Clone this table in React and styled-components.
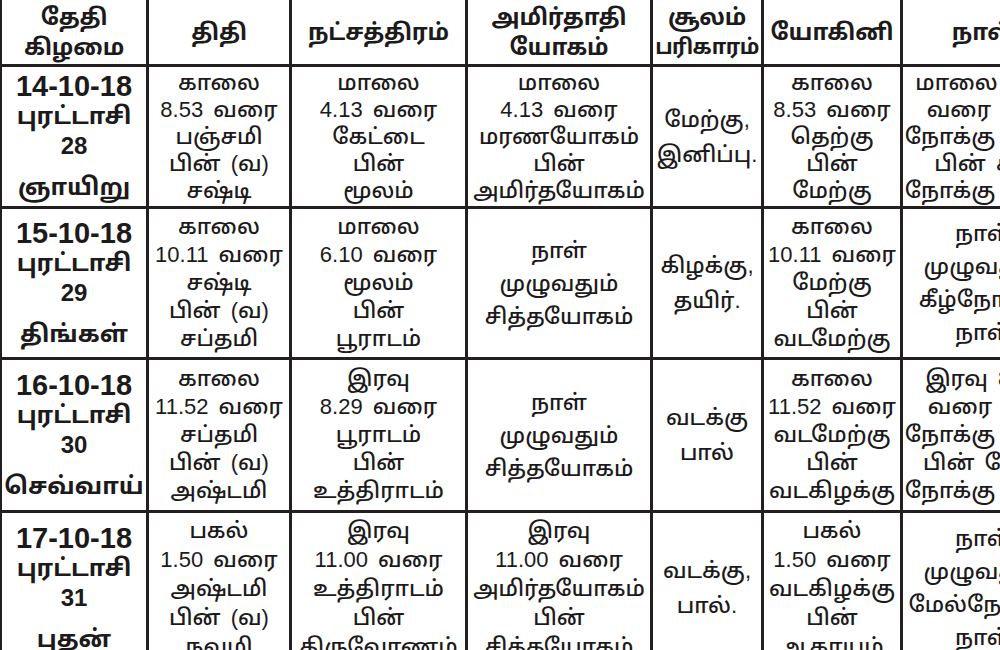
import React from 'react'
import styled, { createGlobalStyle } from 'styled-components'

const GlobalStyle = createGlobalStyle`
  html, body {
    margin: 0;
    padding: 0;
    background: #ffffff;
  }
  body {
    font-family: "Liberation Sans", "Noto Sans Tamil", "Lohit Tamil", "Noto Sans", sans-serif;
    color: #1c1a1b;
  }
`

const Page = styled.div`
  width: 1000px;
  height: 650px;
  overflow: hidden;
  background: #ffffff;
`

const Grid = styled.div`
  display: grid;
  grid-template-columns: 144px 140px 173px 182px 108px 136px 160px;
  grid-template-rows: 64px 139px 148px 150px 150px;
  gap: 3px;
  padding: 0 0 3px 2px;
  width: max-content;
  background: #231f20;
`

const Cell = styled.div`
  background: #ffffff;
  display: flex;
  flex-direction: column;
  align-items: center;
  justify-content: center;
  text-align: center;
  white-space: nowrap;
  overflow: hidden;
`

const HeadLine = styled.div`
  font-weight: 700;
  font-size: ${p => (p.$tight ? '21px' : '23px')};
  line-height: 30px;
  letter-spacing: ${p => (p.$tight ? '-0.6px' : '-0.2px')};
`

const DateLine = styled.div`
  font-weight: 700;
  font-size: ${p => (p.$big ? '29px' : '24px')};
  line-height: 30px;
  margin-top: ${p => (p.$gap ? '11px' : '0')};
`

const Line = styled.div`
  font-size: 22px;
  font-weight: 500;
  line-height: ${p => p.$lh || 27}px;
  word-spacing: 4px;
`

const headers = [
  ['தேதி', 'கிழமை'],
  ['திதி'],
  ['நட்சத்திரம்'],
  ['அமிர்தாதி', 'யோகம்'],
  ['சூலம்', 'பரிகாரம்'],
  ['யோகினி'],
  ['நாள்'],
]

const rows = [
  {
    date: ['14-10-18', 'புரட்டாசி', '28', 'ஞாயிறு'],
    cells: [
      { lines: ['காலை', '8.53 வரை', 'பஞ்சமி', 'பின் (வ)', 'சஷ்டி'], lh: 27 },
      { lines: ['மாலை', '4.13 வரை', 'கேட்டை', 'பின்', 'மூலம்'], lh: 27 },
      { lines: ['மாலை', '4.13 வரை', 'மரணயோகம்', 'பின்', 'அமிர்தயோகம்'], lh: 27 },
      { lines: ['மேற்கு,', 'இனிப்பு.'], lh: 35 },
      { lines: ['காலை', '8.53 வரை', 'தெற்கு', 'பின்', 'மேற்கு'], lh: 27 },
      { lines: ['மாலை 4.13', 'வரை கீழ்', 'நோக்கு நாள்', 'பின் சம', 'நோக்கு நாள்'], lh: 27 },
    ],
  },
  {
    date: ['15-10-18', 'புரட்டாசி', '29', 'திங்கள்'],
    cells: [
      { lines: ['காலை', '10.11 வரை', 'சஷ்டி', 'பின் (வ)', 'சப்தமி'], lh: 28 },
      { lines: ['மாலை', '6.10 வரை', 'மூலம்', 'பின்', 'பூராடம்'], lh: 28 },
      { lines: ['நாள்', 'முழுவதும்', 'சித்தயோகம்'], lh: 33 },
      { lines: ['கிழக்கு,', 'தயிர்.'], lh: 35 },
      { lines: ['காலை', '10.11 வரை', 'மேற்கு', 'பின்', 'வடமேற்கு'], lh: 28 },
      { lines: ['நாள்', 'முழுவதும்', 'கீழ்நோக்கு', 'நாள்'], lh: 33 },
    ],
  },
  {
    date: ['16-10-18', 'புரட்டாசி', '30', 'செவ்வாய்'],
    cells: [
      { lines: ['காலை', '11.52 வரை', 'சப்தமி', 'பின் (வ)', 'அஷ்டமி'], lh: 28 },
      { lines: ['இரவு', '8.29 வரை', 'பூராடம்', 'பின்', 'உத்திராடம்'], lh: 28 },
      { lines: ['நாள்', 'முழுவதும்', 'சித்தயோகம்'], lh: 33 },
      { lines: ['வடக்கு', 'பால்'], lh: 35 },
      { lines: ['காலை', '11.52 வரை', 'வடமேற்கு', 'பின்', 'வடகிழக்கு'], lh: 28 },
      { lines: ['இரவு 8.29', 'வரை சம', 'நோக்கு நாள்', 'பின் மேல்', 'நோக்கு நாள்'], lh: 28 },
    ],
  },
  {
    date: ['17-10-18', 'புரட்டாசி', '31', 'புதன்'],
    cells: [
      { lines: ['பகல்', '1.50 வரை', 'அஷ்டமி', 'பின் (வ)', 'நவமி'], lh: 29 },
      { lines: ['இரவு', '11.00 வரை', 'உத்திராடம்', 'பின்', 'திருவோணம்'], lh: 29 },
      { lines: ['இரவு', '11.00 வரை', 'அமிர்தயோகம்', 'பின்', 'சித்தயோகம்'], lh: 29 },
      { lines: ['வடக்கு,', 'பால்.'], lh: 35 },
      { lines: ['பகல்', '1.50 வரை', 'வடகிழக்கு', 'பின்', 'ஆகாயம்'], lh: 29 },
      { lines: ['நாள்', 'முழுவதும்', 'மேல்நோக்கு', 'நாள்'], lh: 33 },
    ],
  },
]

const App = () => {
  return (
    <>
      <GlobalStyle />
      <Page>
        <Grid>
          {headers.map((h, i) => (
            <Cell key={'h' + i}>
              {h.map(t => (
                <HeadLine key={t} $tight={t === 'பரிகாரம்'}>{t}</HeadLine>
              ))}
            </Cell>
          ))}
          {rows.map(row => (
            <React.Fragment key={row.date[0]}>
              <Cell>
                {row.date.map((t, i) => (
                  <DateLine key={t} $big={i === 0} $gap={i === 3}>{t}</DateLine>
                ))}
              </Cell>
              {row.cells.map((c, ci) => (
                <Cell key={ci}>
                  {c.lines.map((t, li) => <Line key={li} $lh={c.lh}>{t}</Line>)}
                </Cell>
              ))}
            </React.Fragment>
          ))}
        </Grid>
      </Page>
    </>
  )
}

export default App
